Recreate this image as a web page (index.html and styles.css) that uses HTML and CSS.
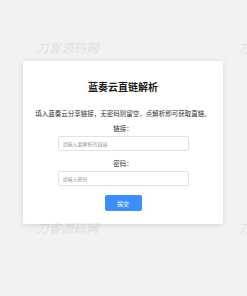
FILE: index.html
```html
<!DOCTYPE html>
<html lang="zh">
<head>
<meta charset="utf-8">
<link rel="stylesheet" href="styles.css">
</head>
<body>
<div class="card">
  <h1 class="title">蓝奏云直链解析</h1>
  <p class="desc">填入蓝奏云分享链接，无密码则留空，点解析即可获取直链。</p>
  <label class="label">链接：</label>
  <input class="field" type="text" placeholder="请输入要解析的链接">
  <label class="label label2">密码：</label>
  <input class="field" type="text" placeholder="请输入密码">
  <button class="btn">提交</button>
</div>
<div class="wm wm1">刀客源码网</div>
<div class="wm wm2">刀客源码网</div>
<div class="wm wm3">刀客源码网</div>
<div class="wm wm4">刀客源码网</div>
</body>
</html>
```
FILE: styles.css
```css
html, body {
  margin: 0;
  padding: 0;
  background: #f2f2f2;
  font-family: "Noto Sans CJK SC", "Noto Sans", sans-serif;
}
body {
  position: relative;
  height: 296px;
  overflow: hidden;
  padding-top: 61px;
  box-sizing: border-box;
}
.card {
  width: 200px;
  margin: 0 0 0 23px;
  background: #fff;
  border-radius: 2px;
  box-shadow: 0 1px 6px rgba(0,0,0,0.12);
  display: flex;
  flex-direction: column;
  align-items: center;
  padding: 19px 0 13px;
  box-sizing: border-box;
  height: 163px;
}
.title {
  margin: 0;
  font-size: 10px;
  line-height: 14px;
  font-weight: 700;
  color: #1a1a1a;
}
.desc {
  margin: 14px 0 0;
  font-size: 6.5px;
  line-height: 10px;
  color: #333;
  white-space: nowrap;
}
.label {
  margin-top: 5px;
  font-size: 6.5px;
  line-height: 10px;
  color: #333;
}
.label2 {
  margin-top: 7px;
}
.field {
  margin-top: 3px;
  width: 131px;
  height: 15px;
  box-sizing: border-box;
  border: 1px solid #e2e2e2;
  border-radius: 2px;
  padding: 0 4px;
  font-family: inherit;
  font-size: 5px;
  color: #333;
  outline: none;
}
.field::placeholder {
  color: #999;
}
.btn {
  margin-top: 9px;
  width: 37px;
  height: 16px;
  border: none;
  border-radius: 2px;
  background: #3d8ef7;
  color: #fff;
  font-family: inherit;
  font-size: 6px;
  padding: 0;
}
.wm {
  position: absolute;
  font-size: 12.5px;
  font-weight: 700;
  font-style: italic;
  color: rgba(0,0,0,0.07);
  line-height: 14px;
  white-space: nowrap;
  pointer-events: none;
}
.wm1 { left: 36px; top: 41px; }
.wm2 { left: 238px; top: 41px; }
.wm3 { left: 36px; top: 221px; }
.wm4 { left: 238px; top: 221px; }
```
